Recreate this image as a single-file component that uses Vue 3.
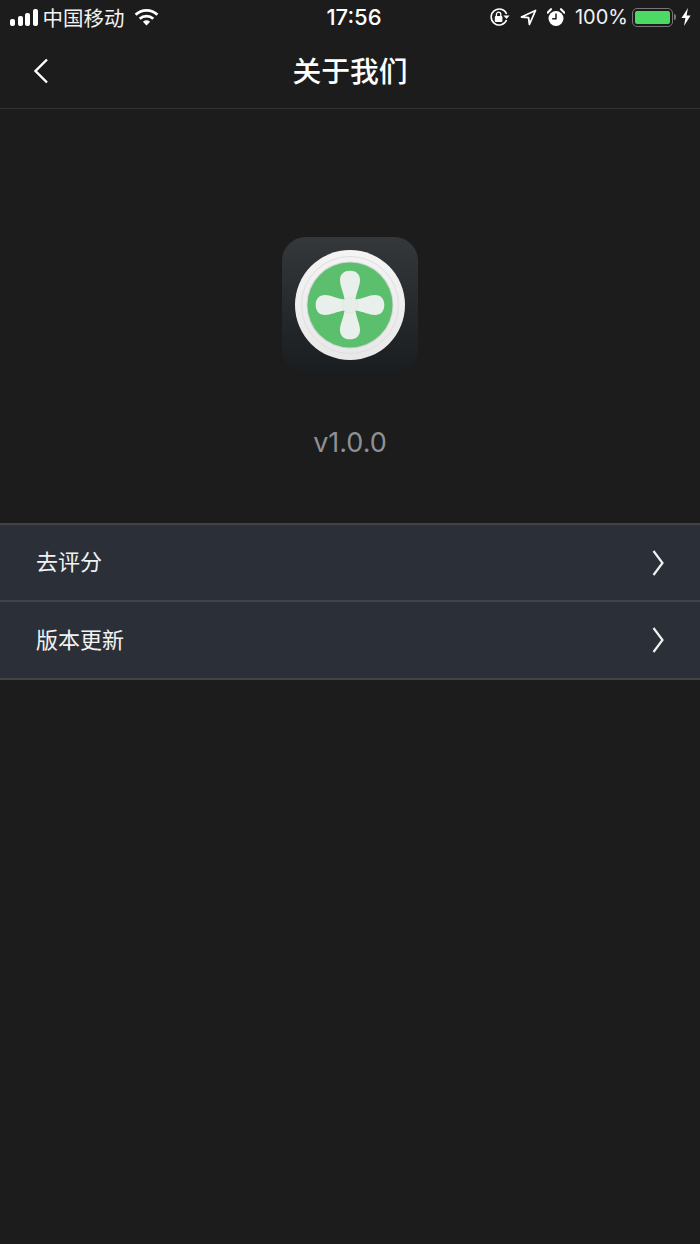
<script setup>
const menuItems = ['去评分', '版本更新']
const bladeAngles = [0, 90, 180, 270]
</script>

<template>
  <div class="page">
    <div class="status-bar">
      <div class="status-left">
        <div class="signal">
          <span class="s1"></span><span class="s2"></span><span class="s3"></span><span class="s4"></span>
        </div>
        <span class="carrier">中国移动</span>
        <svg class="wifi" width="25" height="17" viewBox="0 0 26 18">
          <path d="M1.5 6.2 A16.5 16.5 0 0 1 24.5 6.2" fill="none" stroke="#fff" stroke-width="3" />
          <path d="M5.8 10.4 A10.5 10.5 0 0 1 20.2 10.4" fill="none" stroke="#fff" stroke-width="3" />
          <path d="M9.2 13.4 A6 6 0 0 1 16.8 13.4 L13 17.5 Z" fill="#fff" />
        </svg>
      </div>
      <div class="time">17:56</div>
      <div class="status-right">
        <svg width="21" height="20" viewBox="0 0 21 20">
          <path d="M17.6 7 A8 8 0 1 0 17.6 13" fill="none" stroke="#fff" stroke-width="1.6" />
          <path d="M14.4 8.4 H20.6 L17.5 12 Z" fill="#fff" />
          <rect x="5.8" y="9" width="7.6" height="6" rx="1" fill="#fff" />
          <path d="M7.4 9 V7.4 A2.2 2.2 0 0 1 11.8 7.4 V9" fill="none" stroke="#fff" stroke-width="1.3" />
        </svg>
        <svg class="arrow" width="17" height="17" viewBox="0 0 17 17">
          <path d="M15.5 1.5 L1.5 8 L8.6 8.6 L9.4 15.5 Z" fill="none" stroke="#fff" stroke-width="1.8" stroke-linejoin="round" />
        </svg>
        <svg class="alarm" width="18" height="19" viewBox="0 0 18 19">
          <circle cx="9" cy="10.5" r="7.5" fill="#fff" />
          <path d="M9 5.5 V10.8 H5.2" fill="none" stroke="#1c1c1c" stroke-width="1.5" />
          <path d="M0.6 4.6 L4 1.2 M17.4 4.6 L14 1.2" stroke="#fff" stroke-width="2.2" stroke-linecap="round" />
        </svg>
        <span class="percent">100%</span>
        <div class="battery"><div class="battery-fill"></div></div>
        <div class="battery-cap"></div>
        <svg class="bolt" width="10" height="18" viewBox="0 0 10 18">
          <path d="M7 0 L0.5 10 H4.4 L3 18 L9.6 7.4 H5.6 Z" fill="#fff" />
        </svg>
      </div>
    </div>

    <div class="nav">
      <svg class="back" width="16" height="26" viewBox="0 0 16 26">
        <path d="M14 1.5 L2.5 13 L14 24.5" fill="none" stroke="#fff" stroke-width="2.4" />
      </svg>
      <h1 class="title">关于我们</h1>
    </div>

    <div class="about">
      <div class="logo">
        <svg width="110" height="110" viewBox="0 0 110 110">
          <defs>
            <linearGradient id="ring" x1="0" y1="0" x2="0" y2="1">
              <stop offset="0" stop-color="#f4f4f4" />
              <stop offset="1" stop-color="#e8e8e8" />
            </linearGradient>
          </defs>
          <circle cx="55" cy="55" r="55" fill="url(#ring)" />
          <circle cx="55" cy="55" r="48.5" fill="none" stroke="#dedfde" stroke-width="1" />
          <circle cx="55" cy="55" r="43.5" fill="#cfd6d0" />
          <circle cx="55" cy="55" r="42.5" fill="#5cbf6d" />
          <path
            v-for="angle in bladeAngles"
            :key="angle"
            d="M49.5 49 C48.5 42 45 36 45 30 C45 24 49 20.7 55 20.7 C61 20.7 65 24 65 30 C65 36 61.5 42 60.5 49 Z"
            fill="#e9f0ec"
            :transform="`rotate(${angle} 55 55)`"
          />
          <circle cx="55" cy="55" r="8" fill="#e6eeea" stroke="#dbe3de" stroke-width="0.6" />
        </svg>
      </div>
      <div class="version">v1.0.0</div>
    </div>

    <div class="menu">
      <div v-for="item in menuItems" :key="item" class="menu-row">
        <span class="menu-label">{{ item }}</span>
        <svg class="chevron" width="14" height="28" viewBox="0 0 14 28">
          <path d="M2.5 2 L11.5 14 L2.5 26" fill="none" stroke="#f0f0f0" stroke-width="2.2" />
        </svg>
      </div>
    </div>
  </div>
</template>

<style>
html, body {
  margin: 0;
  background: #1c1c1c;
}
</style>

<style scoped>
.page {
  width: 700px;
  height: 1244px;
  overflow: hidden;
  background: #1c1c1c;
  color: #fff;
  font-family: Inter, "Noto Sans CJK SC", sans-serif;
}

.status-bar {
  position: relative;
  display: flex;
  align-items: center;
  justify-content: space-between;
  height: 34px;
  padding: 0 9px 0 10px;
}

.status-left,
.status-right {
  display: flex;
  align-items: center;
}

.signal {
  display: flex;
  align-items: flex-end;
  gap: 2.5px;
  height: 17px;
}

.signal span {
  width: 5px;
  background: #fff;
  border-radius: 2px;
}

.s1 { height: 7px; }
.s2 { height: 10px; }
.s3 { height: 13px; }
.s4 { height: 17px; }

.carrier {
  margin-left: 5px;
  font-size: 20.5px;
  color: #f2f2f2;
}

.wifi {
  margin-left: 9px;
}

.time {
  position: absolute;
  left: 8px;
  right: 0;
  text-align: center;
  font-size: 22px;
  font-weight: 500;
  line-height: 34px;
  pointer-events: none;
}

.arrow { margin-left: 10px; }
.alarm { margin-left: 10px; }

.percent {
  margin-left: 10px;
  font-size: 20px;
  color: #f2f2f2;
}

.battery {
  margin-left: 4px;
  box-sizing: border-box;
  width: 41px;
  height: 19px;
  padding: 2px;
  border: 1.5px solid #777;
  border-radius: 5px;
}

.battery-fill {
  height: 100%;
  background: #4cd964;
  border-radius: 2px;
}

.battery-cap {
  width: 2px;
  height: 6px;
  margin-left: 1px;
  background: #777;
  border-radius: 0 2px 2px 0;
}

.bolt {
  margin-left: 5px;
}

.nav {
  position: relative;
  display: flex;
  align-items: center;
  justify-content: center;
  box-sizing: border-box;
  height: 75px;
  border-bottom: 1px solid #333;
}

.back {
  position: absolute;
  left: 33px;
  top: 24px;
}

.title {
  margin: 0;
  padding-top: 2px;
  font-size: 28.8px;
  font-weight: 500;
  line-height: 1;
}

.about {
  display: flex;
  flex-direction: column;
  align-items: center;
  height: 414px;
  padding-top: 128px;
  box-sizing: border-box;
}

.logo {
  display: flex;
  align-items: center;
  justify-content: center;
  width: 136px;
  height: 136px;
  border-radius: 24px;
  background: linear-gradient(#35383a, #1a1d1f);
}

.version {
  margin-top: 53px;
  font-size: 27px;
  line-height: 34px;
  color: #8e9094;
}

.menu {
  border-top: 2px solid #414344;
}

.menu-row {
  display: flex;
  align-items: center;
  justify-content: space-between;
  box-sizing: border-box;
  height: 78px;
  padding: 0 35px 0 36px;
  background: #2b3038;
  border-bottom: 2px solid #414344;
}

.menu-row:first-child {
  height: 77px;
}

.menu-label {
  padding-bottom: 5px;
  font-size: 22px;
  color: #f2f2f2;
}
</style>
